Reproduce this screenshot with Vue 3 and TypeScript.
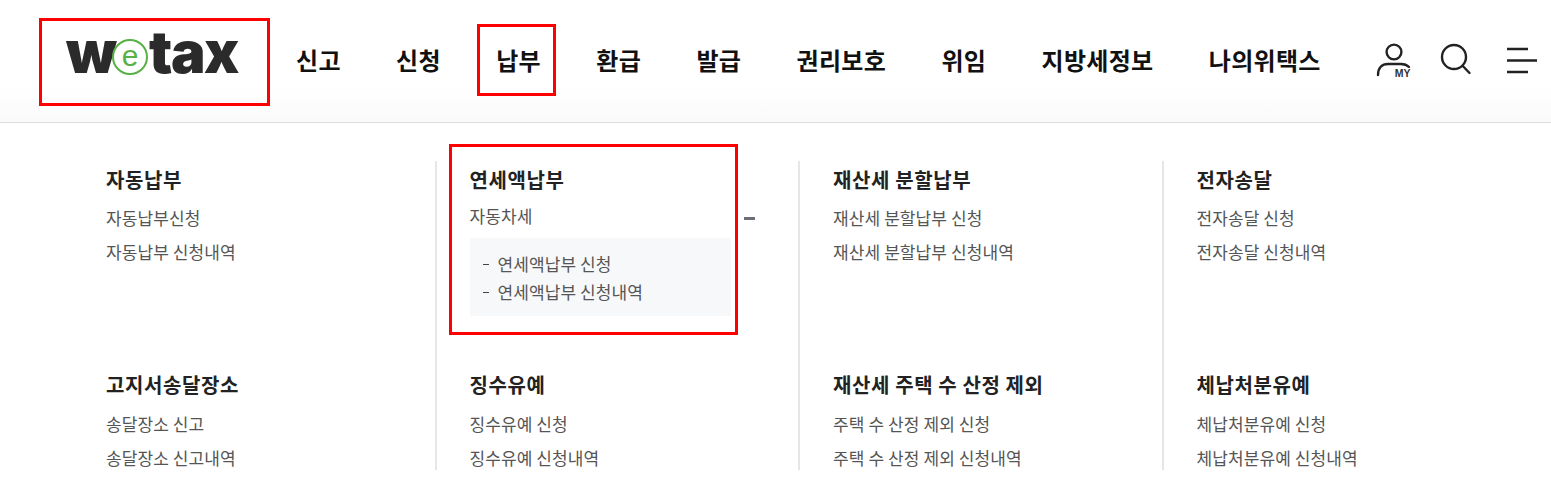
<script setup lang="ts">
interface Section { title: string; links: string[]; sub?: string[] }

const navItems: string[] = ['신고', '신청', '납부', '환급', '발급', '권리보호', '위임', '지방세정보', '나의위택스']

const sections: Section[] = [
  { title: '자동납부', links: ['자동납부신청', '자동납부 신청내역'] },
  { title: '연세액납부', links: ['자동차세'], sub: ['연세액납부 신청', '연세액납부 신청내역'] },
  { title: '재산세 분할납부', links: ['재산세 분할납부 신청', '재산세 분할납부 신청내역'] },
  { title: '전자송달', links: ['전자송달 신청', '전자송달 신청내역'] },
  { title: '고지서송달장소', links: ['송달장소 신고', '송달장소 신고내역'] },
  { title: '징수유예', links: ['징수유예 신청', '징수유예 신청내역'] },
  { title: '재산세 주택 수 산정 제외', links: ['주택 수 산정 제외 신청', '주택 수 산정 제외 신청내역'] },
  { title: '체납처분유예', links: ['체납처분유예 신청', '체납처분유예 신청내역'] },
]
</script>

<template>
  <div class="page">
    <header class="header">
      <a class="logo">
        <span class="logo-w">w</span><span class="logo-e">e</span><span class="logo-tax">tax</span>
      </a>
      <nav class="nav">
        <a v-for="item in navItems" :key="item" class="nav-item" :class="{ marked: item === '납부' }">{{ item }}</a>
      </nav>
      <div class="tools">
        <span class="tool tool-my">
          <svg width="38" height="38" viewBox="0 0 38 38" fill="none" stroke="#222" stroke-width="2.4" stroke-linecap="round">
            <circle cx="18" cy="10" r="7.4" />
            <path d="M2 33 C2 26 6 22 12 22 H25 C28 22 31 23 33 25" />
          </svg>
          <b class="my">MY</b>
        </span>
        <svg class="tool tool-search" width="32" height="32" viewBox="0 0 32 32" fill="none" stroke="#222" stroke-width="2.4" stroke-linecap="round">
          <circle cx="14" cy="14" r="12" />
          <path d="M22.8 23 L29.500 30" />
        </svg>
        <svg class="tool tool-menu" width="30" height="28" viewBox="0 0 30 28" fill="none" stroke="#222" stroke-width="2.4">
          <path d="M0 3 H21 M0 14.500 H30 M0 26 H21" />
        </svg>
      </div>
    </header>

    <main class="menu">
      <section v-for="(s, i) in sections" :key="s.title" class="section" :class="{ marked: s.sub, first: i % 4 === 0, 'top-row': i < 4 }">
        <h3 class="title">{{ s.title }}</h3>
        <ul class="links">
          <li v-for="l in s.links" :key="l" class="link">
            {{ l }}
            <span v-if="s.sub" class="toggle"></span>
          </li>
        </ul>
        <ul v-if="s.sub" class="sub">
          <li v-for="l in s.sub" :key="l" class="sub-link">{{ l }}</li>
        </ul>
      </section>
    </main>
  </div>
</template>

<style>
html, body { margin: 0; background: #fff; }
</style>

<style scoped>
.page {
  width: 1551px;
  height: 504px;
  overflow: hidden;
  font-family: "Noto Sans CJK KR", "Noto Sans", sans-serif;
  color: #111;
  background: #fff;
}
.header {
  height: 122px;
  box-sizing: content-box;
  display: flex;
  align-items: flex-start;
  padding-left: 39px;
  border-bottom: 1px solid #ddd;
  background: linear-gradient(#fff 70%, #fafafa);
}
.logo {
  width: 231px;
  height: 88px;
  margin-top: 18px;
  box-sizing: border-box;
  border: 3px solid #f00;
  display: flex;
  align-items: flex-start;
  padding: 1px 0 0 24px;
  font-family: Inter, "Liberation Sans", sans-serif;
  font-weight: 900;
  font-size: 58px;
  line-height: 60px;
  color: #2b2b2b;
}
.logo-w { letter-spacing: -2px; width: 46px; }
.logo-tax { letter-spacing: -1.5px; margin-left: 1px; }
.logo-e {
  width: 36px;
  height: 36px;
  margin-top: 17px;
  box-sizing: border-box;
  border: 2.500px solid #58b146;
  border-radius: 50%;
  color: #58b146;
  font-family: "Liberation Sans", sans-serif;
  font-weight: 400;
  font-size: 30px;
  line-height: 29px;
  text-align: center;
}
.nav {
  display: flex;
  gap: 55.35px;
  margin-left: 26px;
  margin-top: 6px;
}
.nav-item {
  position: relative;
  font-size: 24px;
  line-height: 70px;
  font-weight: 700;
  letter-spacing: 0.3px;
  color: #111;
  margin-top: 19px;
}
.nav-item.marked::after {
  content: "";
  position: absolute;
  left: -19px;
  right: -15px;
  top: -1px;
  height: 72px;
  box-sizing: border-box;
  border: 3px solid #f00;
}
.tools { flex: 1; display: flex; margin-left: 55px; margin-top: 42px; align-items: flex-start; }
.tool { flex: none; display: block; }
.tool-my { position: relative; width: 38px; height: 38px; }
.my {
  position: absolute;
  left: 18px;
  top: 26px;
  font: 900 10.5px/11px "Liberation Sans", sans-serif;
  color: #333;
  background: #fff;
  padding: 0 0 0 1px;
}
.tool-search { margin: 1px 0 0 26px; }
.tool-menu { margin: 4px 0 0 35px; }
.menu {
  display: grid;
  grid-template-columns: repeat(4, 363.500px);
  grid-template-rows: 206px 103px;
  margin: 38px 0 0 71px;
}
.section {
  position: relative;
  box-sizing: border-box;
  padding: 3px 0 0 33px;
  border-left: 2px solid #e6e6e6;
}
.section.first { border-left-color: transparent; }
.section.top-row { padding-top: 4px; }
.section.top-row .links { margin-top: 6px; }
.title {
  margin: 0;
  font-size: 20px;
  line-height: 30px;
  font-weight: 700;
  letter-spacing: 0.6px;
  color: #222;
}
.links { list-style: none; margin: 7px 0 0; padding: 0; }
.link {
  position: relative;
  font-size: 17px;
  line-height: 34px;
  color: #555;
  letter-spacing: 0.1px;
}
.section.marked .link { line-height: 32px; margin-top: -1px; }
.section.marked::after {
  content: "";
  position: absolute;
  left: 12px;
  top: -17px;
  width: 289px;
  height: 191px;
  box-sizing: border-box;
  border: 3px solid #f00;
}
.toggle {
  position: absolute;
  left: 274px;
  top: 17px;
  width: 11.5px;
  height: 2.500px;
  background: #6b6f78;
}
.sub {
  list-style: none;
  margin: 6px 0 0;
  padding: 12px 0 10px 12px;
  width: 261px;
  box-sizing: border-box;
  background: #f7f8fa;
}
.sub-link {
  font-size: 17px;
  line-height: 28px;
  color: #555;
  padding-left: 16px;
  position: relative;
  letter-spacing: 0.1px;
}
.sub-link::before {
  content: "";
  position: absolute;
  left: 1px;
  top: 14px;
  width: 6px;
  height: 1px;
  background: #444;
}
</style>
